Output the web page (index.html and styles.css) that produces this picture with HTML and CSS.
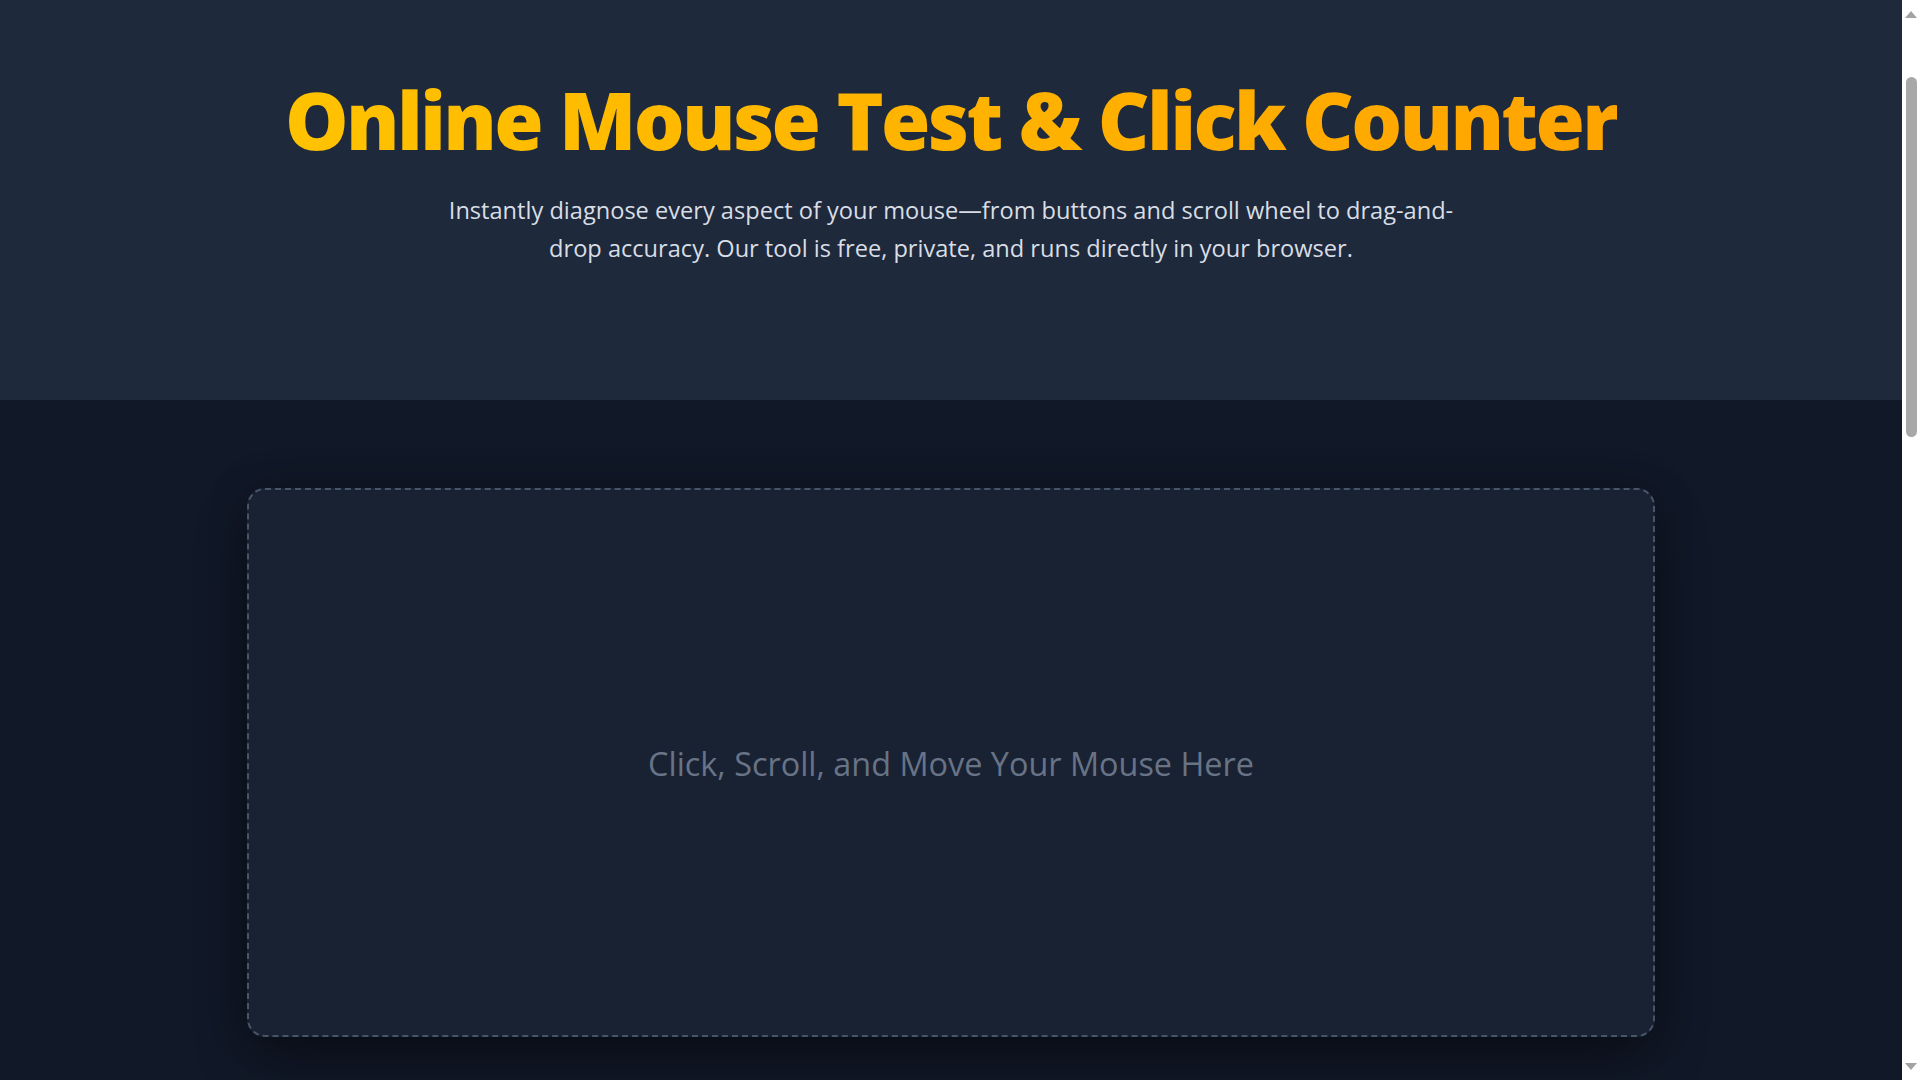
FILE: index.html
```html
<!DOCTYPE html>
<html lang="en">
<head>
<meta charset="utf-8">
<title>Online Mouse Test &amp; Click Counter</title>
<link rel="stylesheet" href="styles.css">
</head>
<body>
<div class="page">
  <header class="hero">
    <h1 class="hero-title">Online Mouse Test &amp; Click Counter</h1>
    <p class="hero-sub">Instantly diagnose every aspect of your mouse—from buttons and scroll wheel to drag-and-drop accuracy. Our tool is free, private, and runs directly in your browser.</p>
  </header>
  <main class="main">
    <section class="test-area">
      <p class="test-hint">Click, Scroll, and Move Your Mouse Here</p>
    </section>
    <section class="below"></section>
  </main>
</div>
<div class="scrollbar" aria-hidden="true">
  <span class="sb-arrow sb-up"></span>
  <span class="sb-thumb"></span>
  <span class="sb-arrow sb-down"></span>
</div>
</body>
</html>
```

FILE: styles.css
```css
* { box-sizing: border-box; }
html, body { margin: 0; padding: 0; }
html { background: #ffffff; }
body {
  font-family: "Open Sans", "Noto Sans", sans-serif;
  color: #d1d5db;
}
.page {
  margin-right: 18px;
  background: #111827;
}
.hero {
  background: #1e293b;
  height: 400px;
  display: flex;
  flex-direction: column;
  align-items: center;
  padding-top: 74px;
}
.hero-title {
  margin: 0;
  font-size: 80px;
  line-height: 90px;
  font-weight: 800;
  letter-spacing: -2.7px;
  background: linear-gradient(90deg, #ffc200, #ffa400);
  -webkit-background-clip: text;
  background-clip: text;
  color: transparent;
}
.hero-sub {
  margin: 27px 0 0;
  max-width: 1024px;
  text-align: center;
  font-size: 23.6px;
  line-height: 38px;
  color: #d8dde6;
}
.main {
  padding: 88px 0 0;
  display: flex;
  flex-direction: column;
  align-items: center;
}
.test-area {
  width: 1408px;
  height: 549px;
  border: 2px dashed #475569;
  border-radius: 18px;
  background: #192233;
  box-shadow: 0 25px 60px -10px rgba(0,0,0,0.45), 0 0 40px rgba(0,0,0,0.2);
  display: flex;
  align-items: center;
  justify-content: center;
}
.test-hint {
  margin: 0;
  font-size: 32.4px;
  color: #687386;
}
.below {
  height: 2100px;
}

/* browser scrollbar as seen in the screenshot */
.scrollbar {
  position: fixed;
  top: 0;
  right: 0;
  width: 18px;
  height: 100vh;
  background: #ffffff;
}
.sb-arrow {
  position: absolute;
  left: 3px;
  width: 0;
  height: 0;
  border-left: 6px solid transparent;
  border-right: 6px solid transparent;
}
.sb-up {
  top: 11px;
  border-bottom: 7px solid #a3a3a3;
}
.sb-down {
  bottom: 10px;
  border-top: 7px solid #a3a3a3;
}
.sb-thumb {
  position: absolute;
  top: 77px;
  left: 4px;
  width: 11px;
  height: 360px;
  border-radius: 6px;
  background: #a8a8a8;
}
```
